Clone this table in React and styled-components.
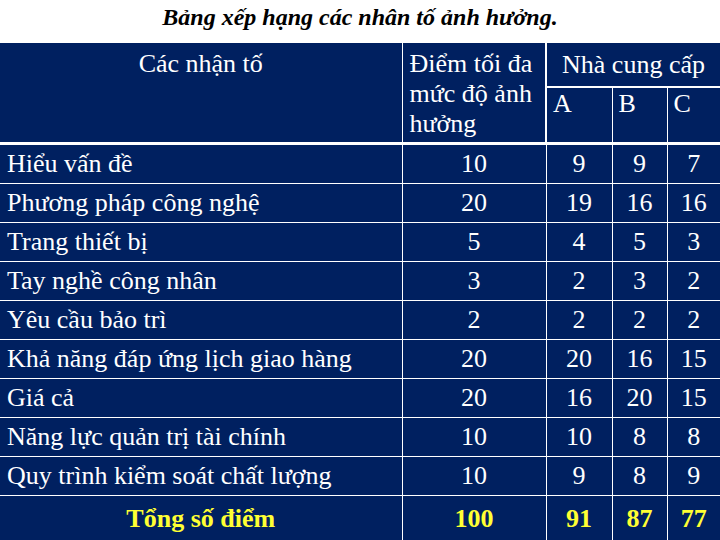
import React from "react";
import styled, { createGlobalStyle } from "styled-components";

const GlobalStyle = createGlobalStyle`
  html, body {
    margin: 0;
    padding: 0;
    background: #fff;
  }
  body {
    width: 720px;
    height: 540px;
    overflow: hidden;
  }
`;

const serif = `"Liberation Serif", "Times New Roman", Times, "DejaVu Serif", serif`;

const rows = [
  { name: "Hiểu vấn đề", max: 10, a: 9, b: 9, c: 7 },
  { name: "Phương pháp công nghệ", max: 20, a: 19, b: 16, c: 16 },
  { name: "Trang thiết bị", max: 5, a: 4, b: 5, c: 3 },
  { name: "Tay nghề công nhân", max: 3, a: 2, b: 3, c: 2 },
  { name: "Yêu cầu bảo trì", max: 2, a: 2, b: 2, c: 2 },
  { name: "Khả năng đáp ứng lịch giao hàng", max: 20, a: 20, b: 16, c: 15 },
  { name: "Giá cả", max: 20, a: 16, b: 20, c: 15 },
  { name: "Năng lực quản trị tài chính", max: 10, a: 10, b: 8, c: 8 },
  { name: "Quy trình kiểm soát chất lượng", max: 10, a: 9, b: 8, c: 9 },
];

const total = { max: 100, a: 91, b: 87, c: 77 };

export default function App() {
  return (
    <>
      <GlobalStyle />
      <Page>
        <Title>Bảng xếp hạng các nhân tố ảnh hưởng.</Title>
        <Table>
          <colgroup>
            <col style={{ width: 402 }} />
            <col style={{ width: 144 }} />
            <col style={{ width: 66 }} />
            <col style={{ width: 55 }} />
            <col style={{ width: 53 }} />
          </colgroup>
          <thead>
            <tr>
              <HeadCell rowSpan={2} $center>Các nhận tố</HeadCell>
              <HeadCell rowSpan={2} $divider>
                Điểm tối đa mức độ ảnh hưởng
              </HeadCell>
              <GroupCell colSpan={3}>Nhà cung cấp</GroupCell>
            </tr>
            <tr>
              <SubCell>A</SubCell>
              <SubCell>B</SubCell>
              <SubCell>C</SubCell>
            </tr>
          </thead>
          <tbody>
            {rows.map((r) => (
              <tr key={r.name}>
                <NameCell>{r.name}</NameCell>
                <NumCell>{r.max}</NumCell>
                <NumCell>{r.a}</NumCell>
                <NumCell>{r.b}</NumCell>
                <NumCell>{r.c}</NumCell>
              </tr>
            ))}
            <tr>
              <TotalLabel>Tổng số điểm</TotalLabel>
              <TotalNum>{total.max}</TotalNum>
              <TotalNum>{total.a}</TotalNum>
              <TotalNum>{total.b}</TotalNum>
              <TotalNum>{total.c}</TotalNum>
            </tr>
          </tbody>
        </Table>
      </Page>
    </>
  );
}

const Page = styled.div`
  width: 720px;
  height: 540px;
  overflow: hidden;
  background: #fff;
  font-family: ${serif};
`;

const Title = styled.h1`
  margin: 0;
  height: 43px;
  padding-top: 2px;
  box-sizing: border-box;
  text-align: center;
  font-family: ${serif};
  font-size: 24px;
  line-height: 30px;
  font-weight: bold;
  font-style: italic;
  color: #000;
`;

const Table = styled.table`
  width: 720px;
  table-layout: fixed;
  border-collapse: collapse;
  background: #002060;
  color: #fff;
  font-family: ${serif};
  font-size: 26px;
`;

const HeadCell = styled.th`
  padding: 6px 6px 0 ${(p) => (p.$center ? "6px" : "7px")};
  text-align: ${(p) => (p.$center ? "center" : "left")};
  vertical-align: top;
  font-weight: normal;
  line-height: 30px;
  border-bottom: 3px solid #fff;
  border-right: ${(p) => (p.$divider ? "2px" : "1px")} solid #fff;
`;

const GroupCell = styled.th`
  height: 43px;
  padding: 0;
  text-align: center;
  vertical-align: middle;
  font-weight: normal;
  line-height: 30px;
  border-bottom: 2px solid #fff;
`;

const SubCell = styled.th`
  height: 53px;
  padding: 1px 0 0 6px;
  text-align: left;
  vertical-align: top;
  font-weight: normal;
  line-height: 30px;
  border-bottom: 3px solid #fff;
  border-left: 1px solid #fff;
  &:first-child {
    border-left-width: 2px;
  }
`;

const NameCell = styled.td`
  height: 38px;
  padding: 0 0 0 7px;
  white-space: nowrap;
  vertical-align: middle;
  line-height: 30px;
  border-bottom: 1px solid #fff;
  border-right: 1px solid #fff;
`;

const NumCell = styled.td`
  height: 38px;
  padding: 0;
  text-align: center;
  vertical-align: middle;
  line-height: 30px;
  border-bottom: 1px solid #fff;
  border-left: 1px solid #fff;
`;

const TotalLabel = styled.td`
  height: 45px;
  padding: 0;
  text-align: center;
  vertical-align: middle;
  font-weight: bold;
  color: #ffff33;
  line-height: 30px;
  border-right: 1px solid #fff;
`;

const TotalNum = styled.td`
  height: 45px;
  padding: 0;
  text-align: center;
  vertical-align: middle;
  font-weight: bold;
  color: #ffff33;
  line-height: 30px;
  border-left: 1px solid #fff;
`;
